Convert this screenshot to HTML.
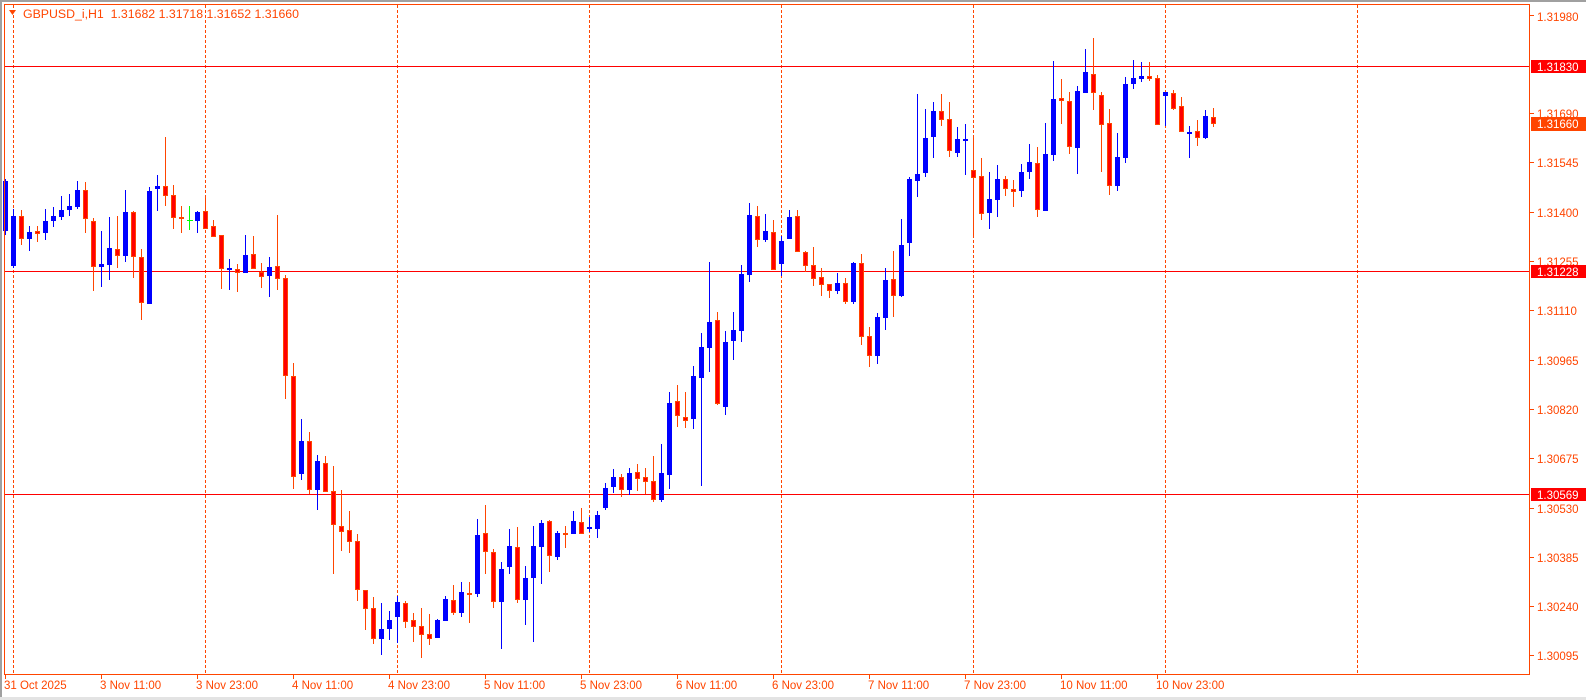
<!DOCTYPE html>
<html><head><meta charset="utf-8"><style>
html,body{margin:0;padding:0;background:#fff;width:1586px;height:700px;overflow:hidden}
svg{display:block}
text{font-family:"Liberation Sans",sans-serif;font-size:11.5px}
</style></head><body>
<svg width="1586" height="700" viewBox="0 0 1586 700" xmlns="http://www.w3.org/2000/svg">
<rect x="0" y="0" width="1586" height="700" fill="#fff"/>
<rect x="0" y="0" width="1586" height="2" fill="#a0a0a0"/>
<rect x="0" y="0" width="2" height="700" fill="#a0a0a0"/>
<rect x="0" y="697" width="1586" height="3" fill="#e3e3e3"/>
<g stroke="#ff4500" stroke-width="1" stroke-dasharray="3,2" fill="none">
<path d="M13.5 5V674M205.5 5V674M397.5 5V674M589.5 5V674M781.5 5V674M973.5 5V674M1165.5 5V674M1357.5 5V674"/>
</g>
<g stroke="#ff0000" stroke-width="1">
<path d="M4 66.5H1529M4 271.5H1529M4 494.5H1529"/>
</g>
<path stroke="#0000ff" stroke-width="1" fill="none" d="M5.5 179V235M13.5 209V268M29.5 226V251M45.5 209V240M53.5 207V227M61.5 196V220M69.5 194V216M77.5 181V209M101.5 231V287M109.5 217V280M125.5 190V262M149.5 187V304M157.5 175V211M197.5 211V233M229.5 259V290M245.5 235V273M269.5 257V297M301.5 419V480M317.5 455V510M381.5 603V655M389.5 611V640M397.5 596V643M437.5 619V638M445.5 596V621M461.5 582V617M477.5 519V597M501.5 562V649M509.5 529V574M525.5 566V625M533.5 526V642M541.5 520V584M557.5 531V560M573.5 511V534M589.5 517V532M597.5 511V538M605.5 483V510M613.5 469V493M629.5 468V495M661.5 444V502M669.5 392V489M693.5 366V429M701.5 333V486M709.5 262V372M725.5 331V415M733.5 312V360M741.5 265V342M749.5 203V282M765.5 214V242M781.5 236V276M789.5 210V239M837.5 273V294M853.5 262V304M877.5 313V364M885.5 268V330M901.5 219V297M909.5 177V256M917.5 94V197M925.5 109V177M933.5 102V158M957.5 127V157M965.5 124V175M989.5 172V229M997.5 165V217M1021.5 164V197M1029.5 144V179M1045.5 123V211M1053.5 61V161M1077.5 86V174M1085.5 49V93M1117.5 133V191M1125.5 77V163M1133.5 60V89M1141.5 62V82M1165.5 92V126M1189.5 126V158M1205.5 110V139"/>
<g fill="#0000ff">
<rect x="3" y="181" width="5" height="50"/><rect x="11" y="216" width="5" height="50"/><rect x="27" y="232" width="5" height="7"/><rect x="43" y="221" width="5" height="12"/><rect x="51" y="216" width="5" height="5"/><rect x="59" y="210" width="5" height="7"/><rect x="67" y="206" width="5" height="4"/><rect x="75" y="190" width="5" height="17"/><rect x="99" y="264" width="5" height="3"/><rect x="107" y="248" width="5" height="17"/><rect x="123" y="212" width="5" height="44"/><rect x="147" y="191" width="5" height="113"/><rect x="155" y="186" width="5" height="3"/><rect x="195" y="212" width="5" height="9"/><rect x="227" y="268" width="5" height="2"/><rect x="243" y="255" width="5" height="18"/><rect x="267" y="267" width="5" height="9"/><rect x="299" y="441" width="5" height="33"/><rect x="315" y="461" width="5" height="29"/><rect x="379" y="629" width="5" height="10"/><rect x="387" y="620" width="5" height="9"/><rect x="395" y="602" width="5" height="15"/><rect x="435" y="620" width="5" height="18"/><rect x="443" y="599" width="5" height="22"/><rect x="459" y="592" width="5" height="21"/><rect x="475" y="535" width="5" height="59"/><rect x="499" y="569" width="5" height="33"/><rect x="507" y="546" width="5" height="21"/><rect x="523" y="578" width="5" height="22"/><rect x="531" y="546" width="5" height="32"/><rect x="539" y="523" width="5" height="24"/><rect x="555" y="533" width="5" height="24"/><rect x="571" y="521" width="5" height="13"/><rect x="587" y="527" width="5" height="2"/><rect x="595" y="515" width="5" height="14"/><rect x="603" y="488" width="5" height="20"/><rect x="611" y="477" width="5" height="10"/><rect x="627" y="473" width="5" height="17"/><rect x="659" y="473" width="5" height="27"/><rect x="667" y="403" width="5" height="72"/><rect x="691" y="376" width="5" height="43"/><rect x="699" y="347" width="5" height="31"/><rect x="707" y="322" width="5" height="26"/><rect x="723" y="342" width="5" height="65"/><rect x="731" y="330" width="5" height="11"/><rect x="739" y="274" width="5" height="57"/><rect x="747" y="215" width="5" height="60"/><rect x="763" y="231" width="5" height="9"/><rect x="779" y="241" width="5" height="23"/><rect x="787" y="217" width="5" height="22"/><rect x="835" y="283" width="5" height="8"/><rect x="851" y="263" width="5" height="39"/><rect x="875" y="317" width="5" height="39"/><rect x="883" y="280" width="5" height="38"/><rect x="899" y="245" width="5" height="51"/><rect x="907" y="179" width="5" height="64"/><rect x="915" y="174" width="5" height="7"/><rect x="923" y="138" width="5" height="35"/><rect x="931" y="111" width="5" height="26"/><rect x="955" y="139" width="5" height="14"/><rect x="963" y="139" width="5" height="2"/><rect x="987" y="199" width="5" height="14"/><rect x="995" y="179" width="5" height="21"/><rect x="1019" y="172" width="5" height="19"/><rect x="1027" y="162" width="5" height="10"/><rect x="1043" y="154" width="5" height="57"/><rect x="1051" y="99" width="5" height="56"/><rect x="1075" y="91" width="5" height="57"/><rect x="1083" y="72" width="5" height="21"/><rect x="1115" y="157" width="5" height="29"/><rect x="1123" y="84" width="5" height="74"/><rect x="1131" y="78" width="5" height="6"/><rect x="1139" y="76" width="5" height="3"/><rect x="1163" y="92" width="5" height="4"/><rect x="1187" y="132" width="5" height="2"/><rect x="1203" y="116" width="5" height="22"/>
</g>
<path stroke="#ff4500" stroke-width="1" fill="none" d="M21.5 210V245M37.5 226V242M85.5 182V233M93.5 218V291M117.5 216V268M133.5 211V278M141.5 249V320M165.5 137V206M173.5 185V229M181.5 206V233M205.5 196V229M213.5 220V237M221.5 235V289M237.5 264V292M253.5 236V269M261.5 263V288M277.5 215V290M285.5 275V399M293.5 363V489M309.5 432V494M325.5 456V492M333.5 466V574M341.5 490V551M349.5 511V553M357.5 534V601M365.5 590V630M373.5 597V644M405.5 601V628M413.5 613V642M421.5 608V658M429.5 614V645M453.5 585V615M469.5 582V623M485.5 505V574M493.5 549V608M517.5 527V603M549.5 520V572M565.5 526V548M581.5 508V534M621.5 474V497M637.5 464V491M645.5 468V494M653.5 456V502M677.5 385V427M685.5 392V428M717.5 312V405M757.5 206V247M773.5 220V270M797.5 210V252M805.5 251V272M813.5 247V286M821.5 268V296M829.5 284V298M845.5 278V304M861.5 254V345M869.5 327V367M893.5 251V317M941.5 94V126M949.5 102V157M973.5 136V235M981.5 158V220M1005.5 176V196M1013.5 180V207M1037.5 147V217M1061.5 79V124M1069.5 92V154M1093.5 38V110M1101.5 92V172M1109.5 109V195M1149.5 62V81M1157.5 75V125M1173.5 90V110M1181.5 97V132M1197.5 120V146M1213.5 108V127"/>
<g fill="#ff0000" stroke="#ff4500" stroke-width="1">
<rect x="19.5" y="216.5" width="4" height="22"/><rect x="35.5" y="231.5" width="4" height="2"/><rect x="83.5" y="190.5" width="4" height="28"/><rect x="91.5" y="221.5" width="4" height="45"/><rect x="115.5" y="249.5" width="4" height="6"/><rect x="131.5" y="212.5" width="4" height="44"/><rect x="139.5" y="257.5" width="4" height="45"/><rect x="163.5" y="186.5" width="4" height="9"/><rect x="171.5" y="195.5" width="4" height="22"/><rect x="179.5" y="217.5" width="4" height="1"/><rect x="203.5" y="211.5" width="4" height="17"/><rect x="211.5" y="226.5" width="4" height="10"/><rect x="219.5" y="235.5" width="4" height="33"/><rect x="235.5" y="269.5" width="4" height="3"/><rect x="251.5" y="254.5" width="4" height="14"/><rect x="259.5" y="272.5" width="4" height="4"/><rect x="275.5" y="266.5" width="4" height="12"/><rect x="283.5" y="278.5" width="4" height="97"/><rect x="291.5" y="376.5" width="4" height="100"/><rect x="307.5" y="441.5" width="4" height="48"/><rect x="323.5" y="463.5" width="4" height="28"/><rect x="331.5" y="491.5" width="4" height="33"/><rect x="339.5" y="526.5" width="4" height="5"/><rect x="347.5" y="530.5" width="4" height="11"/><rect x="355.5" y="541.5" width="4" height="48"/><rect x="363.5" y="590.5" width="4" height="18"/><rect x="371.5" y="608.5" width="4" height="30"/><rect x="403.5" y="603.5" width="4" height="18"/><rect x="411.5" y="620.5" width="4" height="6"/><rect x="419.5" y="626.5" width="4" height="8"/><rect x="427.5" y="634.5" width="4" height="4"/><rect x="451.5" y="600.5" width="4" height="12"/><rect x="467.5" y="593.5" width="4" height="1"/><rect x="483.5" y="533.5" width="4" height="18"/><rect x="491.5" y="552.5" width="4" height="49"/><rect x="515.5" y="547.5" width="4" height="52"/><rect x="547.5" y="521.5" width="4" height="34"/><rect x="563.5" y="533.5" width="4" height="1"/><rect x="579.5" y="522.5" width="4" height="11"/><rect x="619.5" y="477.5" width="4" height="12"/><rect x="635.5" y="472.5" width="4" height="6"/><rect x="643.5" y="477.5" width="4" height="4"/><rect x="651.5" y="481.5" width="4" height="18"/><rect x="675.5" y="401.5" width="4" height="14"/><rect x="683.5" y="417.5" width="4" height="3"/><rect x="715.5" y="320.5" width="4" height="83"/><rect x="755.5" y="216.5" width="4" height="23"/><rect x="771.5" y="232.5" width="4" height="37"/><rect x="795.5" y="216.5" width="4" height="35"/><rect x="803.5" y="252.5" width="4" height="13"/><rect x="811.5" y="265.5" width="4" height="13"/><rect x="819.5" y="277.5" width="4" height="7"/><rect x="827.5" y="284.5" width="4" height="6"/><rect x="843.5" y="283.5" width="4" height="18"/><rect x="859.5" y="263.5" width="4" height="73"/><rect x="867.5" y="336.5" width="4" height="19"/><rect x="891.5" y="279.5" width="4" height="16"/><rect x="939.5" y="111.5" width="4" height="8"/><rect x="947.5" y="119.5" width="4" height="31"/><rect x="971.5" y="170.5" width="4" height="7"/><rect x="979.5" y="176.5" width="4" height="37"/><rect x="1003.5" y="179.5" width="4" height="9"/><rect x="1011.5" y="189.5" width="4" height="2"/><rect x="1035.5" y="163.5" width="4" height="46"/><rect x="1059.5" y="98.5" width="4" height="2"/><rect x="1067.5" y="101.5" width="4" height="45"/><rect x="1091.5" y="74.5" width="4" height="18"/><rect x="1099.5" y="95.5" width="4" height="29"/><rect x="1107.5" y="123.5" width="4" height="62"/><rect x="1147.5" y="76.5" width="4" height="2"/><rect x="1155.5" y="78.5" width="4" height="46"/><rect x="1171.5" y="93.5" width="4" height="15"/><rect x="1179.5" y="106.5" width="4" height="25"/><rect x="1195.5" y="131.5" width="4" height="6"/><rect x="1211.5" y="117.5" width="4" height="6"/>
</g>
<path stroke="#00ff00" stroke-width="1" fill="none" d="M189.5 206V230M187 220.5H193"/>
<rect x="4.5" y="4.5" width="1525" height="670" fill="none" stroke="#ff4500" stroke-width="1"/>
<path d="M9 10H16L12.5 15Z" fill="#ff4500"/>
<text x="23" y="18" fill="#ff4500" textLength="276" lengthAdjust="spacingAndGlyphs">GBPUSD_i,H1&#160;&#160;1.31682 1.31718 1.31652 1.31660</text>
<path stroke="#ff4500" stroke-width="1" d="M1530 15.5H1534M1530 113.5H1534M1530 162.5H1534M1530 212.5H1534M1530 261.5H1534M1530 310.5H1534M1530 360.5H1534M1530 409.5H1534M1530 458.5H1534M1530 508.5H1534M1530 557.5H1534M1530 606.5H1534M1530 655.5H1534"/>
<g fill="#ff4500">
<text x="1537" y="21">1.31980</text>
<text x="1537" y="118">1.31690</text>
<text x="1537" y="167">1.31545</text>
<text x="1537" y="217">1.31400</text>
<text x="1537" y="266">1.31255</text>
<text x="1537" y="315">1.31110</text>
<text x="1537" y="365">1.30965</text>
<text x="1537" y="414">1.30820</text>
<text x="1537" y="463">1.30675</text>
<text x="1537" y="513">1.30530</text>
<text x="1537" y="562">1.30385</text>
<text x="1537" y="611">1.30240</text>
<text x="1537" y="660">1.30095</text>
</g>
<rect x="1531" y="60" width="55" height="13" fill="#ff0000"/>
<text x="1537" y="71" fill="#fff">1.31830</text>
<rect x="1531" y="117" width="55" height="14" fill="#ff4500"/>
<text x="1537" y="128" fill="#fff">1.31660</text>
<rect x="1531" y="265" width="55" height="13" fill="#ff0000"/>
<text x="1537" y="276" fill="#fff">1.31228</text>
<rect x="1531" y="488" width="55" height="13" fill="#ff0000"/>
<text x="1537" y="499" fill="#fff">1.30569</text>
<path stroke="#ff4500" stroke-width="1" d="M5.5 674V679M101.5 674V679M197.5 674V679M293.5 674V679M389.5 674V679M485.5 674V679M581.5 674V679M677.5 674V679M773.5 674V679M869.5 674V679M965.5 674V679M1061.5 674V679M1157.5 674V679"/>
<g fill="#ff4500">
<text x="4" y="689">31 Oct 2025</text>
<text x="100" y="689">3 Nov 11:00</text>
<text x="196" y="689">3 Nov 23:00</text>
<text x="292" y="689">4 Nov 11:00</text>
<text x="388" y="689">4 Nov 23:00</text>
<text x="484" y="689">5 Nov 11:00</text>
<text x="580" y="689">5 Nov 23:00</text>
<text x="676" y="689">6 Nov 11:00</text>
<text x="772" y="689">6 Nov 23:00</text>
<text x="868" y="689">7 Nov 11:00</text>
<text x="964" y="689">7 Nov 23:00</text>
<text x="1060" y="689">10 Nov 11:00</text>
<text x="1156" y="689">10 Nov 23:00</text>
</g>
</svg>
</body></html>
